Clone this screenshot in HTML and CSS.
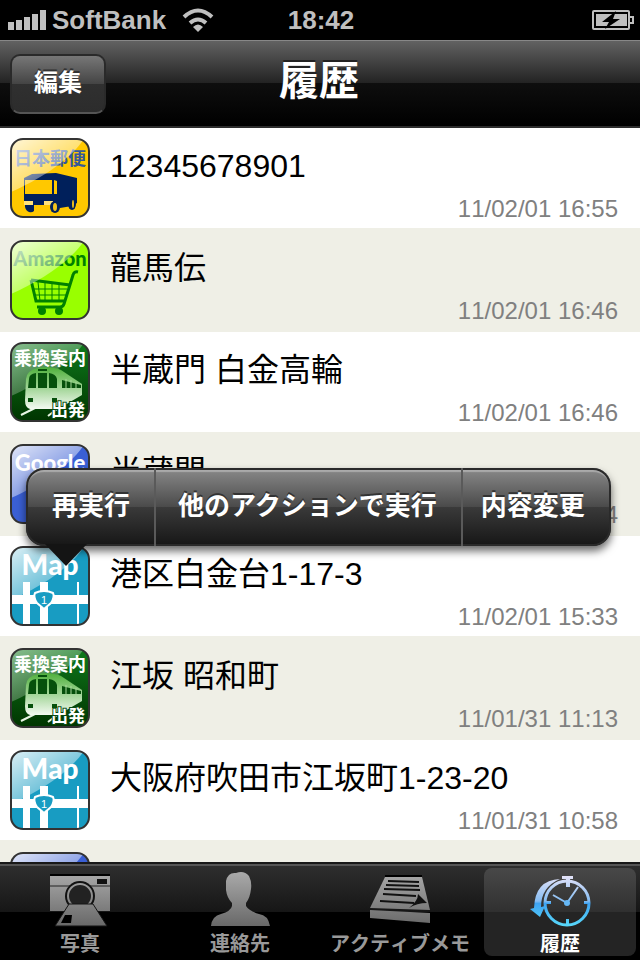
FILE: index.html
```html
<!DOCTYPE html>
<html lang="ja">
<head>
  <meta charset="UTF-8">
  <meta name="viewport" content="width=device-width, initial-scale=1.0">
  <title>履歴</title>
  <link rel="stylesheet" href="styles.css">
</head>
<body>
  <!-- shared gradients and list icons -->
  <svg class="defs" width="0" height="0" aria-hidden="true">
    <defs>
      <linearGradient id="gloss" x1="0" y1="0" x2="0.7" y2="0.8">
        <stop offset="0" stop-color="#fff" stop-opacity="0.85"/>
        <stop offset="1" stop-color="#fff" stop-opacity="0.25"/>
      </linearGradient>
      <linearGradient id="train" x1="0" y1="0" x2="0" y2="1">
        <stop offset="0" stop-color="#4fb03c"/>
        <stop offset="1" stop-color="#f4faf2"/>
      </linearGradient>
      <linearGradient id="green" x1="0" y1="0" x2="0" y2="1">
        <stop offset="0" stop-color="#0f7a1c"/>
        <stop offset="1" stop-color="#003500"/>
      </linearGradient>
      <linearGradient id="gray" gradientUnits="userSpaceOnUse" x1="0" y1="0" x2="0" y2="56">
        <stop offset="0" stop-color="#aaa"/>
        <stop offset="1" stop-color="#666"/>
      </linearGradient>
      <linearGradient id="blue" gradientUnits="userSpaceOnUse" x1="0" y1="4" x2="0" y2="54">
        <stop offset="0" stop-color="#e4e2f8"/>
        <stop offset="0.5" stop-color="#86bdf2"/>
        <stop offset="0.55" stop-color="#3fa4f2"/>
        <stop offset="1" stop-color="#58d8fa"/>
      </linearGradient>

      <symbol id="icon-post" viewBox="0 0 80 80">
        <rect x="1" y="1" width="78" height="78" rx="12" fill="#ffc800"/>
        <text class="icon-ja" x="40" y="27" font-size="18" fill="#36589a">日本郵便</text>
        <path d="M14 40 22 36 46 35 67 40V65L62 68 50 70 44 67H14Z" fill="#00205b"/>
        <path d="M15 42H42V56H15ZM44 42 47 43V56H44Z" fill="#ffc800"/>
        <path d="M14 63H23V67H14ZM34 63H43V67H34Z" fill="#ffe27a"/>
        <path d="M15 67H24V73Q22 75 19 74Q16 73 15 69Z" fill="#00205b"/>
        <ellipse cx="45" cy="69" rx="5" ry="6" fill="#00205b"/>
        <ellipse cx="62" cy="66" rx="4" ry="6" fill="#00205b"/>
        <ellipse cx="45" cy="69" rx="2" ry="4" fill="#f2c21c"/>
        <ellipse cx="63" cy="66" rx="1" ry="4" fill="#f2c21c"/>
        <path class="gloss" d="M1 54C28 42 58 24 74 1H14Q1 1 1 14Z"/>
        <rect class="frame" x="1" y="1" width="78" height="78" rx="12"/>
      </symbol>

      <symbol id="icon-amazon" viewBox="0 0 80 80">
        <rect x="1" y="1" width="78" height="78" rx="12" fill="#99ff00"/>
        <text class="icon-latin" x="40" y="26" font-size="20" fill="#008000">Amazon</text>
        <g fill="none" stroke="#008000">
          <path d="M68 32Q64 31 63 35L54 64Q53 67 50 67H27" stroke-width="3"/>
          <path d="M21 40 60 45M21 40 26 61H55" stroke-width="3"/>
          <path d="M28 42 30 61M35 43V61M42 43V61M49 44V61M23 49H57M24 55H56" stroke-width="1"/>
        </g>
        <circle cx="32" cy="71" r="4" fill="#008000"/>
        <circle cx="49" cy="71" r="4" fill="#008000"/>
        <path class="gloss" d="M1 54C28 42 58 24 74 1H14Q1 1 1 14Z"/>
        <rect class="frame" x="1" y="1" width="78" height="78" rx="12"/>
      </symbol>

      <symbol id="icon-train" viewBox="0 0 80 80">
        <rect x="1" y="1" width="78" height="78" rx="12" fill="url(#green)"/>
        <path class="gloss soft" d="M1 54C28 42 58 24 74 1H14Q1 1 1 14Z"/>
        <path d="M25 66 11 73M47 67 38 74" fill="none" stroke="#e8f5e4" stroke-width="2"/>
        <path d="M16 37Q17 28 28 26Q42 24 51 28L72 42V53L48 67H20Q15 66 15 58Z" fill="url(#train)"/>
        <path d="M19 37Q19 32 26 31V46H18ZM28 31H37V46H28ZM39 31Q46 32 47 37V46H39ZM18 56h5v4h-5ZM42 56h5v4h-5Z" fill="#06500c"/>
        <path d="M52 38V46H71V43ZM28 27h9v2h-9Z" fill="#06500c"/>
        <path d="M56 37V47M61 38V47M66 40V47" stroke="#a6d89a" stroke-width="1"/>
        <text class="icon-ja" x="40" y="23" font-size="18" fill="#fff">乗換案内</text>
        <text class="icon-ja" x="58" y="74" font-size="17" fill="#fff" stroke="#0b4a10" stroke-width="2" paint-order="stroke">出発</text>
        <rect class="frame" x="1" y="1" width="78" height="78" rx="12"/>
      </symbol>

      <symbol id="icon-google" viewBox="0 0 80 80">
        <rect x="1" y="1" width="78" height="78" rx="12" fill="#3a5fd4"/>
        <path class="gloss" d="M1 54C28 42 58 24 74 1H14Q1 1 1 14Z"/>
        <text class="icon-latin" x="40" y="27" font-size="22" fill="#fff">Google</text>
        <rect class="frame" x="1" y="1" width="78" height="78" rx="12"/>
      </symbol>

      <symbol id="icon-map" viewBox="0 0 80 80">
        <rect x="1" y="1" width="78" height="78" rx="12" fill="#189cc2"/>
        <path class="gloss" d="M1 54C28 42 58 24 74 1H14Q1 1 1 14Z"/>
        <path d="M2 49H78V58H2ZM13 36H20V78H13ZM30 36H38V78H30ZM67 36H69V78H67Z" fill="#fff"/>
        <path d="M34 45Q39 45 43 47Q45 51 41 57L34 63 27 57Q23 51 25 47Q29 45 34 45Z" fill="#189cc2" stroke="#fff" stroke-width="2"/>
        <text class="icon-num" x="34" y="58" font-size="11" fill="#fff">1</text>
        <text class="icon-latin" x="40" y="29" font-size="28" fill="#fff">Map</text>
        <rect class="frame" x="1" y="1" width="78" height="78" rx="12"/>
      </symbol>
    </defs>
  </svg>

  <div class="status-bar">
    <div class="carrier">
      <svg width="38" height="20" viewBox="0 0 38 20" fill="#bfbfbf" aria-hidden="true">
        <path d="M0 12h6v8H0ZM8 10h6v10H8ZM16 7h6v13h-6ZM24 4h6v16h-6ZM32 0h6v20h-6Z"/>
      </svg>
      <span class="carrier-name">SoftBank</span>
      <svg class="wifi" width="32" height="24" viewBox="0 0 32 24" aria-hidden="true">
        <path d="M2 9Q16-4 30 9M8 15Q16 8 24 15" fill="none" stroke="#bfbfbf" stroke-width="4"/>
        <path d="M16 24 11 19Q16 14 21 19Z" fill="#bfbfbf"/>
      </svg>
    </div>
    <div class="time">18:42</div>
    <div class="battery">
      <svg width="42" height="20" viewBox="0 0 42 20" aria-hidden="true">
        <rect x="1" y="1" width="36" height="18" rx="1" fill="none" stroke="#bfbfbf" stroke-width="2"/>
        <path d="M4 4h31v12H4Z" fill="#bfbfbf"/>
        <path d="M38 7h3v6h-3" fill="none" stroke="#bfbfbf" stroke-width="2"/>
        <path d="M24 1 10 12H17L13 19 28 9H21Z" fill="#000"/>
      </svg>
    </div>
  </div>

  <header class="nav-bar">
    <button class="edit-button" type="button">編集</button>
    <h1>履歴</h1>
  </header>

  <main class="content">
    <ul class="history">
      <li><a href="#">
        <svg class="app-icon" aria-hidden="true"><use href="#icon-post"/></svg>
        <span class="title">12345678901</span>
        <span class="date">11/02/01 16:55</span>
      </a></li>
      <li><a href="#">
        <svg class="app-icon" aria-hidden="true"><use href="#icon-amazon"/></svg>
        <span class="title">龍馬伝</span>
        <span class="date">11/02/01 16:46</span>
      </a></li>
      <li><a href="#">
        <svg class="app-icon" aria-hidden="true"><use href="#icon-train"/></svg>
        <span class="title">半蔵門 白金高輪</span>
        <span class="date">11/02/01 16:46</span>
      </a></li>
      <li><a href="#">
        <svg class="app-icon" aria-hidden="true"><use href="#icon-google"/></svg>
        <span class="title">半蔵門</span>
        <span class="date">11/02/01 16:34</span>
      </a></li>
      <li><a href="#">
        <svg class="app-icon" aria-hidden="true"><use href="#icon-map"/></svg>
        <span class="title">港区白金台1-17-3</span>
        <span class="date">11/02/01 15:33</span>
      </a></li>
      <li><a href="#">
        <svg class="app-icon" aria-hidden="true"><use href="#icon-train"/></svg>
        <span class="title">江坂 昭和町</span>
        <span class="date">11/01/31 11:13</span>
      </a></li>
      <li><a href="#">
        <svg class="app-icon" aria-hidden="true"><use href="#icon-map"/></svg>
        <span class="title">大阪府吹田市江坂町1-23-20</span>
        <span class="date">11/01/31 10:58</span>
      </a></li>
      <li><a href="#" aria-label="Google">
        <svg class="app-icon" aria-hidden="true"><use href="#icon-google"/></svg>
      </a></li>
    </ul>

    <div class="popover">
      <button type="button">再実行</button>
      <button type="button">他のアクションで実行</button>
      <button type="button">内容変更</button>
    </div>
  </main>

  <nav class="tab-bar">
    <a href="#">
      <svg width="64" height="60" viewBox="0 0 64 60" aria-hidden="true">
        <path d="M2 2H62V4H2Z" fill="#000"/>
        <path d="M2 4H62V39H2Z" fill="url(#gray)"/>
        <path d="M2 14H62" stroke="#222" stroke-width="1"/>
        <path d="M49 7H59V12H49Z" fill="#111"/>
        <circle cx="32" cy="24" r="15" fill="#111"/>
        <circle cx="32" cy="24" r="12" fill="#222" stroke="url(#gray)" stroke-width="2"/>
        <path d="M21 32H45L59 54H7Z" fill="url(#gray)" stroke="#151515" stroke-width="1"/>
        <path d="M17 43H24L23 51H13Z" fill="#000"/>
      </svg>
      <span>写真</span>
    </a>
    <a href="#">
      <svg width="64" height="60" viewBox="0 0 64 60" aria-hidden="true">
        <path d="M18 9Q20 0 28 1Q36-2 41 4Q44 10 43 17Q42 26 38 31V34Q41 39 51 42Q60 43 62 54H3Q4 44 13 42Q23 39 24 34V31Q19 26 18 18Z" fill="url(#gray)"/>
      </svg>
      <span>連絡先</span>
    </a>
    <a href="#">
      <svg width="64" height="60" viewBox="0 0 64 60" aria-hidden="true">
        <path d="M17 5H54L62 38 2 36Z" fill="url(#gray)"/>
        <path d="M2 38 62 41V51L2 46Z" fill="url(#gray)"/>
        <path d="M17 4H54" stroke="#000" stroke-width="2"/>
        <path d="M20 9 51 10M18 13 51 14M16 17 52 18M15 22 48 24M12 29 46 31" stroke="#111" stroke-width="2"/>
        <path d="M50 22 59 31Q49 31 41 36Q50 29 50 22Z" fill="#111"/>
      </svg>
      <span>アクティブメモ</span>
    </a>
    <a class="active" href="#">
      <svg width="64" height="60" viewBox="0 0 64 60" aria-hidden="true">
        <circle cx="39" cy="31" r="22" fill="none" stroke="url(#blue)" stroke-width="3"/>
        <path d="M34 4H45V7H42V15H38V7H34ZM38 47h3v6h-3ZM18 29h5v3h-5ZM56 29h5v3h-5Z" fill="url(#blue)"/>
        <path d="M25 23 39 31 50 15" fill="none" stroke="url(#blue)" stroke-width="2"/>
        <circle cx="39" cy="31" r="3" fill="#65b7f5"/>
        <path d="M32 7Q7 8 6 36L2 37 12 45 17 34 13 35Q13 15 32 7Z" fill="url(#blue)"/>
      </svg>
      <span>履歴</span>
    </a>
  </nav>
</body>
</html>
```

FILE: styles.css
```css
* {
    box-sizing: border-box;
}

body {
    display: flex;
    flex-direction: column;
    height: 100vh;
    margin: 0;
    background-color: #fff;
    font-family: "Liberation Sans", "Noto Sans CJK JP", sans-serif;
    font-kerning: none;
}

button {
    font-family: inherit;
    cursor: pointer;
}

a {
    color: inherit;
    text-decoration: none;
}

.defs {
    position: absolute;
}

/* status bar */
.status-bar {
    display: grid;
    grid-template-columns: 1fr auto 1fr;
    align-items: center;
    flex: none;
    height: 40px;
    padding: 0 6px 0 8px;
    background-color: #000;
    color: #bfbfbf;
    font-size: 26px;
    font-weight: bold;
}

.carrier {
    display: flex;
    align-items: center;
    gap: 6px;
}

.wifi {
    margin-left: 10px;
}

.battery {
    display: flex;
    justify-content: flex-end;
}

/* navigation bar */
.nav-bar {
    display: grid;
    grid-template-columns: 1fr auto 1fr;
    align-items: center;
    flex: none;
    height: 88px;
    padding: 0 12px 0 10px;
    border-top: 1px solid #888;
    border-bottom: 2px solid #2d2d2d;
    background: linear-gradient(#626262, #222 50%, #0e0e0e 50%, #000);
    color: #fff;
}

.nav-bar h1 {
    margin: 0;
    padding-bottom: 6px;
    font-size: 40px;
    line-height: 48px;
    text-shadow: 0 -2px 0 #222;
}

.edit-button {
    justify-self: start;
    width: 96px;
    height: 60px;
    padding: 0 0 6px;
    border: 2px solid #2a2a2a;
    border-bottom-color: #555;
    border-radius: 10px;
    background: linear-gradient(#777, #444 50%, #303030 50%, #2c2c2c);
    color: #fff;
    font-size: 24px;
    font-weight: bold;
    text-shadow: 0 -2px 0 #333;
}

/* history list */
.content {
    position: relative;
    flex: 1;
    min-height: 0;
    overflow: hidden;
}

.history {
    margin: 0;
    padding: 0;
    list-style: none;
}

.history a {
    display: grid;
    grid-template-columns: 80px 1fr;
    grid-template-rows: 56px 24px;
    column-gap: 20px;
    padding: 10px 22px 10px 10px;
}

.history li:nth-child(even) {
    background-color: #efefe6;
}

.history li:nth-child(even) a {
    padding-top: 12px;
    padding-bottom: 12px;
}

.app-icon {
    grid-row: 1 / 3;
    width: 80px;
    height: 80px;
}

.title {
    color: #000;
    font-size: 32px;
    line-height: 56px;
}

.date {
    color: #808080;
    font-size: 24px;
    line-height: 30px;
    text-align: right;
}

.gloss {
    fill: url(#gloss);
}

.gloss.soft {
    opacity: 0.6;
}

.frame {
    fill: none;
    stroke: #333;
    stroke-width: 2px;
}

.icon-ja {
    font-family: "Noto Sans CJK JP", sans-serif;
    font-weight: bold;
    text-anchor: middle;
}

.icon-latin {
    font-family: Lato, sans-serif;
    font-weight: 900;
    text-anchor: middle;
}

.icon-num {
    font-family: "Liberation Sans", sans-serif;
    text-anchor: middle;
}

/* action menu over the list */
.popover {
    position: absolute;
    top: 340px;
    left: 26px;
    display: flex;
    height: 78px;
    border-radius: 18px;
    background: linear-gradient(#8a8a8a, #4a4a4a 50%, #3a3a3a 50%, #161616);
    box-shadow: inset 0 0 0 2px #2a2a2a, inset 0 4px 1px #aaa, 0 5px 8px rgba(0, 0, 0, 0.6);
}

.popover::after {
    content: "";
    position: absolute;
    top: 76px;
    left: 19px;
    width: 42px;
    height: 22px;
    background-color: #141414;
    clip-path: polygon(0 0, 100% 0, 50% 100%);
}

.popover button {
    padding: 0 24px 8px;
    border: 0;
    border-left: 2px solid #5a5a5a;
    background: none;
    color: #fff;
    font-size: 26px;
    font-weight: bold;
    text-shadow: 0 -2px 0 #333;
}

.popover button:first-child {
    padding-left: 26px;
    border-left: 0;
}

.popover button:nth-child(2) {
    padding-left: 22px;
}

.popover button:last-child {
    padding-left: 18px;
    padding-right: 26px;
}

/* tab bar */
.tab-bar {
    display: grid;
    grid-template-columns: repeat(4, 1fr);
    flex: none;
    height: 98px;
    padding: 4px 0;
    border-top: 2px solid #181818;
    background: linear-gradient(#555 2px, #2e2e2e 2px, #161616 50%, #000 50%);
    color: #999;
    font-size: 20px;
    font-weight: bold;
}

.tab-bar a {
    display: flex;
    flex-direction: column;
    align-items: center;
    margin: 0 4px;
    padding-top: 4px;
    border-radius: 8px;
    line-height: 24px;
    white-space: nowrap;
}

.tab-bar svg {
    flex: none;
    overflow: visible;
}

.tab-bar .active {
    background: linear-gradient(#484848, #303030 50%, #242424 50%);
    color: #fff;
}
```
